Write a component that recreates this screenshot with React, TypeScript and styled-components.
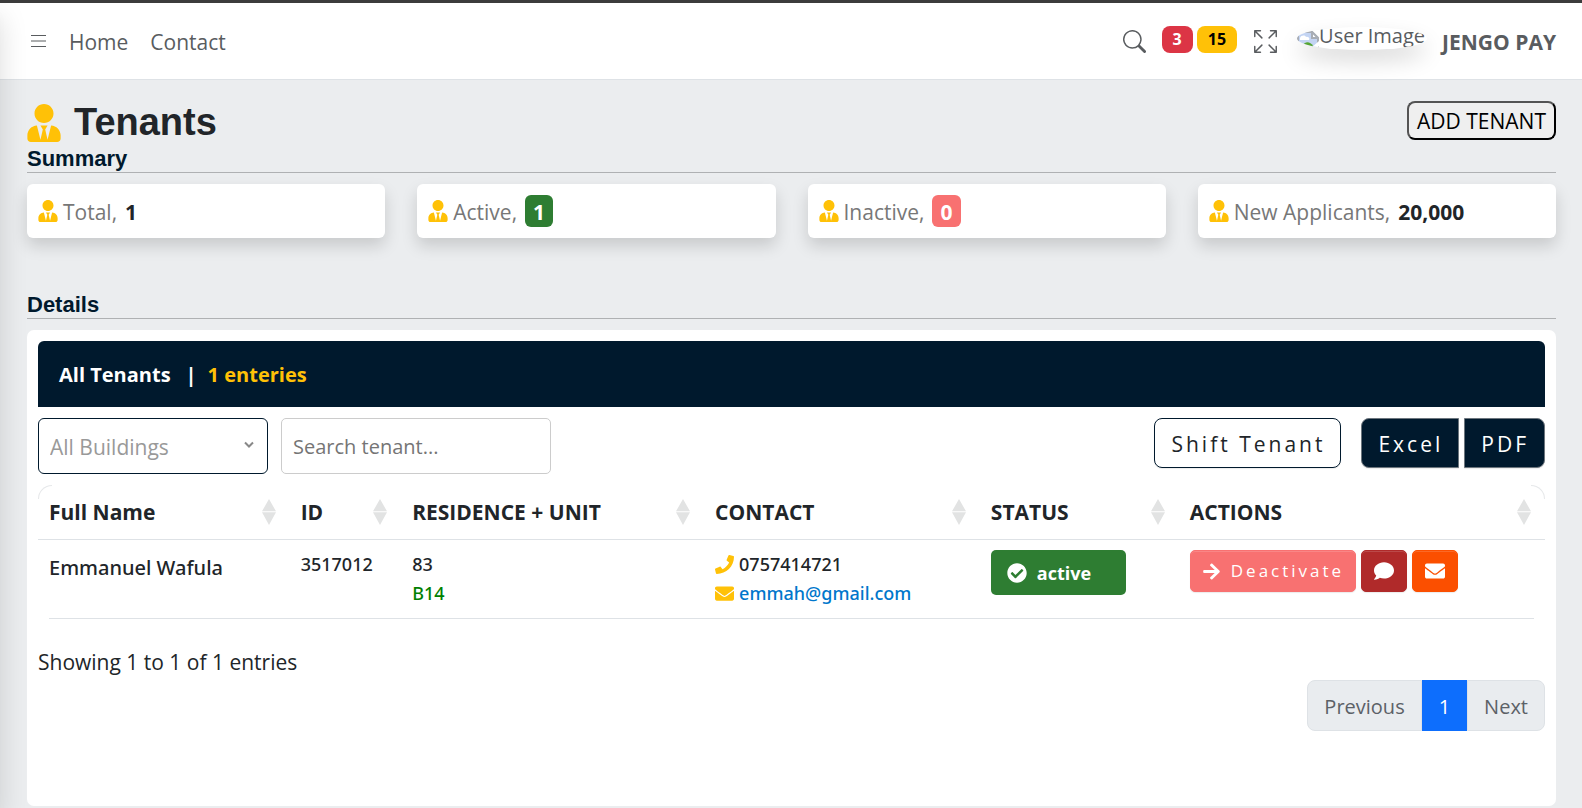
import React from 'react';
import styled, { createGlobalStyle, css } from 'styled-components';
import { BsSearch, BsArrowsFullscreen } from 'react-icons/bs';
import {
  FaUserTie,
  FaPhone,
  FaEnvelope,
  FaCheckCircle,
  FaArrowRight,
  FaComment,
} from 'react-icons/fa';

const NAVY = '#00192d';
const AMBER = '#ffc107';
const GREEN = '#2e7d32';
const CORAL = '#f87171';

const GlobalStyle = createGlobalStyle`
  *, *::before, *::after { box-sizing: border-box; }
  body {
    margin: 0;
    background: #ebedef;
    color: #212529;
    font-family: "Open Sans", "Noto Sans", sans-serif;
    font-size: 21px;
    line-height: 30px;
  }
  button, input, select { font: inherit; }
  button { cursor: pointer; }
  h1, h2, p { margin: 0; }
  a { color: inherit; text-decoration: none; }
`;

const Page = styled.div`
  position: relative;
  overflow: hidden;
  border-top: 3px solid #3c3c3c;
`;

const SidebarEdge = styled.div`
  position: absolute;
  top: 0;
  bottom: 0;
  left: -20px;
  width: 20px;
  pointer-events: none;
  box-shadow: 0 14px 28px rgba(0, 0, 0, 0.15), 0 10px 10px rgba(0, 0, 0, 0.02);
`;

const Navbar = styled.header`
  display: flex;
  align-items: center;
  justify-content: space-between;
  height: 77px;
  padding: 2px 26px 0 31px;
  background: #fff;
  border-bottom: 1px solid #dee2e6;
  color: #595c5f;
`;

const NavLinks = styled.nav`
  display: flex;
  align-items: center;
  gap: 22px;
`;

const IconButton = styled.button`
  display: flex;
  padding: 0 0 2px;
  border: 0;
  background: none;
  color: inherit;
`;

const NavTools = styled.div`
  display: flex;
  align-items: center;
`;

const Counters = styled.div`
  display: flex;
  gap: 4px;
  margin: 0 17px 5px 16px;
`;

const Counter = styled.span<{ $tone: 'danger' | 'warning' }>`
  padding: 0 11px;
  border-radius: 8px;
  font-size: 16px;
  line-height: 27px;
  font-weight: 700;
  background: ${p => (p.$tone === 'danger' ? '#dc3545' : AMBER)};
  color: ${p => (p.$tone === 'danger' ? '#fff' : '#000')};
`;

const Avatar = styled.span`
  display: flex;
  align-items: flex-start;
  width: 130px;
  height: 23px;
  margin: 0 15px 7px 20px;
  border-radius: 50%;
  overflow: hidden;
  white-space: nowrap;
  font-size: 20px;
  line-height: 17px;
  box-shadow: 0 11px 22px rgba(0, 0, 0, 0.15);
  svg {
    flex: none;
    margin-top: 4px;
  }
`;

const UserName = styled.strong`
  font-weight: 700;
`;

const Main = styled.main`
  padding: 21px 26px 2px 27px;
`;

const TitleRow = styled.div`
  display: flex;
  align-items: flex-start;
  justify-content: space-between;
  padding-bottom: 2px;
`;

const Title = styled.h1`
  display: flex;
  align-items: center;
  gap: 13px;
  font: 700 38px/43px "Liberation Sans", Arial, sans-serif;
  svg {
    width: 34px;
    color: ${AMBER};
  }
`;

const AddButton = styled.button`
  height: 39px;
  padding: 2px 8px 0;
  border: 2px outset #000;
  border-radius: 8px;
  background: #efefef;
  color: #000;
  line-height: 33px;
`;

const SectionTitle = styled.h2`
  border-bottom: 1px solid #afb1b3;
  color: ${NAVY};
  font: 700 22px/26px "Liberation Sans", Arial, sans-serif;
`;

const Summary = styled.div`
  display: grid;
  grid-template-columns: repeat(4, 1fr);
  gap: 32px;
  margin: 11px 0 54px;
`;

const SummaryCard = styled.div`
  display: flex;
  align-items: center;
  height: 54px;
  padding: 0 11px;
  border-radius: 6px;
  background: #fff;
  box-shadow: 0 8px 16px rgba(0, 0, 0, 0.15);
  color: #777;
  line-height: 32px;
  svg {
    width: 20px;
    margin-right: 5px;
    color: ${AMBER};
  }
`;

const SummaryLabel = styled.span`
  padding-top: 2px;
`;

const SummaryValue = styled.b<{ $fill?: string }>`
  margin-left: 8px;
  padding-top: 2px;
  color: #212529;
  ${p =>
    p.$fill &&
    css`
      padding: 2px 8px 0;
      border-radius: 6px;
      background: ${p.$fill};
      color: #fff;
      line-height: 30px;
    `}
`;

const Panel = styled.section`
  min-height: 476px;
  margin-top: 11px;
  padding: 11px;
  border-radius: 7px;
  background: #fff;
`;

const PanelHeader = styled.div`
  display: flex;
  align-items: center;
  height: 66px;
  padding: 2px 21px 0;
  border-radius: 6px 6px 0 0;
  background: ${NAVY};
  color: #fff;
  font-size: 20px;
  font-weight: 700;
`;

const Divider = styled.span`
  margin: 0 11px 0 15px;
`;

const EntryCount = styled.span`
  color: ${AMBER};
`;

const Toolbar = styled.div`
  display: flex;
  justify-content: space-between;
  align-items: flex-start;
  margin: 11px 0;
`;

const Filters = styled.div`
  display: flex;
  gap: 13px;
`;

const SelectWrap = styled.div`
  position: relative;
  display: flex;
  svg {
    position: absolute;
    right: 14px;
    top: 23px;
    pointer-events: none;
  }
`;

const BuildingSelect = styled.select`
  appearance: none;
  width: 230px;
  height: 56px;
  padding: 2px 11px 0;
  border: 1px solid ${NAVY};
  border-radius: 6px;
  background: #fff;
  color: #999;
`;

const SearchBox = styled.input`
  width: 270px;
  height: 56px;
  padding: 0 11px;
  border: 1px solid #ccc;
  border-radius: 5px;
  font-size: 20px;
  &::placeholder { color: #757575; opacity: 1; }
`;

const ToolButtons = styled.div`
  display: flex;
  gap: 5px;
`;

const ToolButton = styled.button<{ $kind: 'outline' | 'left' | 'right' }>`
  height: 50px;
  padding: 2px 15px 0 16px;
  border: 1px solid ${p => (p.$kind === 'outline' ? NAVY : '#6c757d')};
  border-radius: ${p => ({ outline: '8px', left: '8px 0 0 8px', right: '0 8px 8px 0' })[p.$kind]};
  margin-right: ${p => (p.$kind === 'outline' ? '15px' : '0')};
  background: ${p => (p.$kind === 'outline' ? '#fff' : NAVY)};
  color: ${p => (p.$kind === 'outline' ? '#212529' : '#fff')};
  letter-spacing: 3px;
  box-shadow: 0 1px 1px rgba(0, 0, 0, 0.08);
`;

const TableFrame = styled.div`
  position: relative;
  &::before,
  &::after {
    content: '';
    position: absolute;
    top: 0;
    width: 14px;
    height: 14px;
    border-top: 1px solid #e6e8ea;
  }
  &::before {
    left: 0;
    border-left: 1px solid #e6e8ea;
    border-top-left-radius: 14px;
  }
  &::after {
    right: 0;
    border-right: 1px solid #e6e8ea;
    border-top-right-radius: 14px;
  }
`;

const TenantTable = styled.table`
  width: 100%;
  table-layout: fixed;
  border-collapse: separate;
  border-spacing: 0;
`;

const HeadCell = styled.th<{ $share: number }>`
  width: ${p => p.$share}%;
  height: 55px;
  padding: 0 14px 0 11px;
  border-bottom: 1px solid #dee2e6;
  text-align: left;
  font-weight: 700;
  white-space: nowrap;
`;

const HeadLabel = styled.span`
  display: flex;
  align-items: center;
  justify-content: space-between;
`;

const Cell = styled.td`
  height: 78px;
  padding: 10px 11px;
  vertical-align: top;
  font-family: "Noto Sans", "Open Sans", sans-serif;
  font-weight: 500;
`;

const FullName = styled.span`
  font-size: 20px;
  line-height: 35px;
  white-space: nowrap;
`;

const Detail = styled.div<{ $color?: string }>`
  display: flex;
  align-items: center;
  gap: 5px;
  font-size: 18px;
  line-height: 29px;
  color: ${p => p.$color || 'inherit'};
  svg { color: ${AMBER}; }
`;

const StatusButton = styled.button`
  display: flex;
  align-items: center;
  gap: 10px;
  width: 135px;
  height: 45px;
  padding: 0 16px;
  border: 0;
  border-radius: 5px;
  background: ${GREEN};
  color: #fff;
  font-family: "Open Sans", sans-serif;
  font-size: 18px;
  font-weight: 700;
`;

const Actions = styled.div`
  display: flex;
  gap: 5px;
`;

const ActionButton = styled.button<{ $fill: string; $iconOnly?: boolean }>`
  display: flex;
  align-items: center;
  gap: 10px;
  height: 42px;
  padding: 0 ${p => (p.$iconOnly ? 12 : 11)}px;
  border: 1px solid ${p => p.$fill};
  border-radius: 5px;
  background: ${p => p.$fill};
  color: #fff;
  font-family: "Open Sans", sans-serif;
  font-size: 18px;
  font-weight: 400;
  letter-spacing: 3px;
  box-shadow: inset 0 1px 0 rgba(255, 255, 255, 0.15), 0 1px 1px rgba(0, 0, 0, 0.08);
`;

const ActionLabel = styled.span`
  font-size: 17px;
`;

const RowRule = styled.div`
  height: 1px;
  margin: 0 11px;
  background: #dee2e6;
`;

const Info = styled.p`
  margin-top: 28px;
`;

const Pagination = styled.nav`
  display: flex;
  justify-content: flex-end;
  margin-top: 3px;
`;

const PageButton = styled.button<{ $kind: 'previous' | 'current' | 'next' }>`
  height: 51px;
  padding: 2px 16px 0;
  border: 1px solid ${p => (p.$kind === 'current' ? '#0d6efd' : '#dee2e6')};
  border-radius: ${p => ({ previous: '8px 0 0 8px', current: '0', next: '0 8px 8px 0' })[p.$kind]};
  background: ${p => (p.$kind === 'current' ? '#0d6efd' : '#e9ecef')};
  color: ${p => (p.$kind === 'current' ? '#fff' : '#5c6167')};
  font-size: 20px;
`;

const MenuIcon = () => (
  <svg width="16" height="13" viewBox="0 0 16 13" stroke="currentColor" fill="none" aria-hidden="true">
    <path d="M0 .5h15M0 6h15M0 11.5h15" />
  </svg>
);

const SortIcon = () => (
  <svg width="14" height="26" viewBox="0 0 14 26" fill="#e2e3e3" aria-hidden="true">
    <path d="M7 0l7 12.3H0zM0 13.3h14L7 26z" />
  </svg>
);

const BrokenImageIcon = () => (
  <svg width="22" height="22" viewBox="0 0 22 22" aria-hidden="true">
    <path d="M1 1h14l6 6v14H1z" fill="#c3d4f3" stroke="#a8adb5" strokeWidth="2" />
    <path d="M3 7c1-3 5-3 6-1 3-1 4 2 3 3H3z" fill="#fff" />
    <path d="M5 15c3-5 8-5 11 0v4H5z" fill="#56a632" />
    <path d="M15 1v6h6z" fill="#fff" stroke="#a8adb5" strokeWidth="2" />
    <path d="M14 17l8-7v5l-6 7z" fill="#fff" />
  </svg>
);

const ChevronIcon = () => (
  <svg width="10" height="8" viewBox="0 0 10 8" fill="none" stroke="#888" strokeWidth="2" aria-hidden="true">
    <path d="M1 1.5l4 4 4-4" />
  </svg>
);

const summary = [
  { label: 'Total,', value: '1' },
  { label: 'Active,', value: '1', fill: GREEN },
  { label: 'Inactive,', value: '0', fill: CORAL },
  { label: 'New Applicants,', value: '20,000' },
];

const columns = [
  { label: 'Full Name', share: 16.7 },
  { label: 'ID', share: 7.4 },
  { label: 'RESIDENCE + UNIT', share: 20.1 },
  { label: 'CONTACT', share: 18.3 },
  { label: 'STATUS', share: 13.2 },
  { label: 'ACTIONS', share: 24.3 },
];

export default function App() {
  return (
    <Page>
      <GlobalStyle />
      <Navbar>
        <NavLinks>
          <IconButton aria-label="Toggle menu"><MenuIcon /></IconButton>
          <a href="#home">Home</a>
          <a href="#contact">Contact</a>
        </NavLinks>
        <NavTools>
          <IconButton aria-label="Search"><BsSearch size={23} /></IconButton>
          <Counters>
            <Counter $tone="danger">3</Counter>
            <Counter $tone="warning">15</Counter>
          </Counters>
          <IconButton aria-label="Full screen"><BsArrowsFullscreen size={23} /></IconButton>
          <Avatar><BrokenImageIcon />User Image</Avatar>
          <UserName>JENGO PAY</UserName>
        </NavTools>
      </Navbar>

      <Main>
        <TitleRow>
          <Title><FaUserTie size={38} />Tenants</Title>
          <AddButton>ADD TENANT</AddButton>
        </TitleRow>
        <SectionTitle>Summary</SectionTitle>
        <Summary>
          {summary.map(s => (
            <SummaryCard key={s.label}>
              <FaUserTie size={22} />
              <SummaryLabel>{s.label}</SummaryLabel>
              <SummaryValue $fill={s.fill}>{s.value}</SummaryValue>
            </SummaryCard>
          ))}
        </Summary>

        <SectionTitle>Details</SectionTitle>
        <Panel>
          <PanelHeader>
            All Tenants<Divider>|</Divider><EntryCount>1 enteries</EntryCount>
          </PanelHeader>
          <Toolbar>
            <Filters>
              <SelectWrap>
                <BuildingSelect aria-label="Building">
                  <option>All Buildings</option>
                </BuildingSelect>
                <ChevronIcon />
              </SelectWrap>
              <SearchBox type="text" placeholder="Search tenant..." aria-label="Search tenant" />
            </Filters>
            <ToolButtons>
              <ToolButton $kind="outline">Shift Tenant</ToolButton>
              <ToolButton $kind="left">Excel</ToolButton>
              <ToolButton $kind="right">PDF</ToolButton>
            </ToolButtons>
          </Toolbar>

          <TableFrame>
            <TenantTable>
              <thead>
                <tr>
                  {columns.map(c => (
                    <HeadCell key={c.label} $share={c.share}>
                      <HeadLabel>{c.label}<SortIcon /></HeadLabel>
                    </HeadCell>
                  ))}
                </tr>
              </thead>
              <tbody>
                <tr>
                  <Cell><FullName>Emmanuel Wafula</FullName></Cell>
                  <Cell><Detail>3517012</Detail></Cell>
                  <Cell>
                    <Detail>83</Detail>
                    <Detail $color="#008000">B14</Detail>
                  </Cell>
                  <Cell>
                    <Detail><FaPhone size={19} />0757414721</Detail>
                    <Detail $color="#0077cc">
                      <FaEnvelope size={19} /><a href="mailto:emmah@gmail.com">emmah@gmail.com</a>
                    </Detail>
                  </Cell>
                  <Cell>
                    <StatusButton><FaCheckCircle size={20} />active</StatusButton>
                  </Cell>
                  <Cell>
                    <Actions>
                      <ActionButton $fill={CORAL}>
                        <FaArrowRight size={19} /><ActionLabel>Deactivate</ActionLabel>
                      </ActionButton>
                      <ActionButton $fill="#b02a2a" $iconOnly aria-label="Message"><FaComment size={20} /></ActionButton>
                      <ActionButton $fill="#fb4f00" $iconOnly aria-label="Email"><FaEnvelope size={20} /></ActionButton>
                    </Actions>
                  </Cell>
                </tr>
              </tbody>
            </TenantTable>
            <RowRule />
          </TableFrame>

          <Info>Showing 1 to 1 of 1 entries</Info>
          <Pagination aria-label="Table pages">
            <PageButton $kind="previous">Previous</PageButton>
            <PageButton $kind="current">1</PageButton>
            <PageButton $kind="next">Next</PageButton>
          </Pagination>
        </Panel>
      </Main>
      <SidebarEdge />
    </Page>
  );
}
